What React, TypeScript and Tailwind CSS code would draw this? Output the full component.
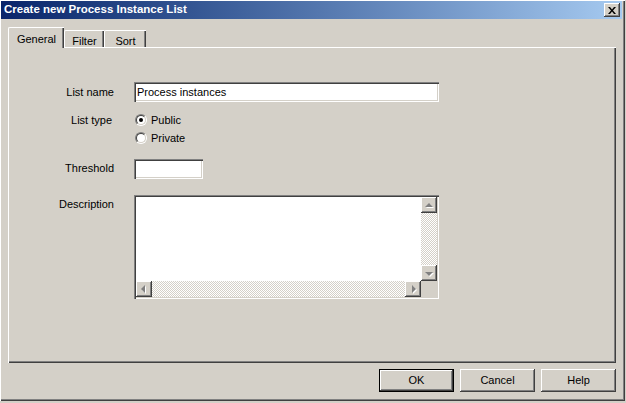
import React from "react";

const raised =
  "shadow-[inset_-1px_-1px_#404040,inset_1px_1px_#ffffff,inset_-2px_-2px_#808080]";
const sunken =
  "shadow-[inset_1px_1px_#808080,inset_2px_2px_#404040,inset_-1px_-1px_#ffffff,inset_-2px_-2px_#d4d0c8]";
const checker =
  "bg-[repeating-conic-gradient(#d4d0c8_0%_25%,#ffffff_0%_50%)] bg-[length:2px_2px]";

function Arrow({ dir }: { dir: "up" | "down" | "left" | "right" }) {
  const pts: Record<string, string> = {
    up: "3,8 7,4 11,8",
    down: "3,5 11,5 7,9",
    left: "8,2 8,10 4,6",
    right: "6,2 6,10 10,6",
  };
  return (
    <svg width="14" height="12" viewBox="0 0 14 12">
      <polygon points={pts[dir]} fill="#ffffff" transform="translate(1,1)" />
      <polygon points={pts[dir]} fill="#808080" />
    </svg>
  );
}

function ScrollButton({ dir }: { dir: "up" | "down" | "left" | "right" }) {
  return (
    <div
      className={`w-[16px] h-[16px] shrink-0 bg-[#d4d0c8] flex items-center justify-center ${raised}`}
    >
      <Arrow dir={dir} />
    </div>
  );
}

function Radio({ checked, label }: { checked?: boolean; label: string }) {
  return (
    <div className="h-[18px] flex items-center ml-[2px]">
      <div className="w-[12px] h-[12px] rounded-full border border-t-[#808080] border-l-[#808080] border-r-white border-b-white">
        <div className="w-full h-full rounded-full border border-t-[#404040] border-l-[#404040] border-r-[#d4d0c8] border-b-[#d4d0c8] bg-white flex items-center justify-center">
          {checked && <div className="w-[4px] h-[4px] rounded-full bg-black" />}
        </div>
      </div>
      <span className="ml-[4px]">{label}</span>
    </div>
  );
}

function Button({ label, isDefault }: { label: string; isDefault?: boolean }) {
  return (
    <div
      className={`w-[75px] h-[23px] bg-[#d4d0c8] flex items-center justify-center ${
        isDefault
          ? "border border-black shadow-[inset_-1px_-1px_#404040,inset_1px_1px_#ffffff,inset_-2px_-2px_#808080]"
          : raised
      }`}
    >
      {label}
    </div>
  );
}

export default function App() {
  return (
    <div
      className="w-[626px] h-[403px] bg-[#d4d0c8] text-[11px] text-black"
      style={{ fontFamily: '"Liberation Sans", Arial, sans-serif' }}
    >
      <div className="w-[625px] h-[401px] pl-px pt-px pr-[3px] flex flex-col shadow-[inset_1px_1px_#ffffff,inset_-1px_-1px_#404040,inset_-2px_-2px_#808080]">
        {/* title bar */}
        <div className="h-[18px] shrink-0 bg-linear-to-r from-[#0a246a] to-[#a6caf0] flex items-center justify-between pl-[3px] pr-[2px]">
          <span className="text-white font-bold text-[11.5px] leading-none">
            Create new Process Instance List
          </span>
          <div className={`w-[16px] h-[14px] bg-[#d4d0c8] flex items-center justify-center ${raised}`}>
            <svg width="8" height="7" viewBox="0 0 8 7">
              <path d="M0 0h2l2 2.5L6 0h2L5 3.5 8 7H6L4 4.5 2 7H0l3-3.5z" fill="#000" />
            </svg>
          </div>
        </div>

        {/* tabs */}
        <div className="mt-[8px] h-[20px] pl-[7px] flex items-end relative z-10">
          <div className="w-[56px] h-[21px] -mb-px bg-[#d4d0c8] border-t border-l border-white rounded-tl-[2px] shadow-[inset_-1px_0_#404040,inset_-2px_0_#808080] flex items-start justify-center pt-[3px]">
            General
          </div>
          <div className="w-[40px] h-[17px] bg-[#d4d0c8] border-t border-l border-white rounded-tl-[2px] shadow-[inset_-1px_0_#404040,inset_-2px_0_#808080] flex items-start justify-center pt-[2px]">
            Filter
          </div>
          <div className="w-[42px] h-[17px] bg-[#d4d0c8] border-t border-l border-white rounded-tl-[2px] shadow-[inset_-1px_0_#404040,inset_-2px_0_#808080] flex items-start justify-center pt-[2px]">
            Sort
          </div>
        </div>

        {/* panel */}
        <div className="ml-[7px] w-[608px] h-[316px] shrink-0 shadow-[inset_1px_1px_#ffffff,inset_-1px_-1px_#404040,inset_-2px_-2px_#808080] pl-px pt-[35px] flex flex-col">
          <div className="flex items-center">
            <div className="w-[105px] text-right">List name</div>
            <div className={`ml-[20px] w-[305px] h-[20px] bg-white ${sunken} flex items-center pl-[3px]`}>
              Process instances
            </div>
          </div>

          <div className="flex mt-[9px]">
            <div className="w-[103px] h-[18px] flex items-center justify-end">List type</div>
            <div className="ml-[22px] flex flex-col -translate-x-[1px]">
              <Radio checked label="Public" />
              <Radio label="Private" />
            </div>
          </div>

          <div className="flex items-center mt-[12px]">
            <div className="w-[105px] text-right -translate-y-[1px]">Threshold</div>
            <div className={`ml-[20px] w-[69px] h-[20px] bg-white ${sunken}`} />
          </div>

          <div className="flex mt-[16px]">
            <div className="w-[105px] text-right pt-[1px]">Description</div>
            <div className={`ml-[20px] w-[305px] h-[104px] bg-white ${sunken} p-[2px] flex flex-col`}>
              <div className="flex flex-1">
                <div className="flex-1" />
                <div className="w-[16px] flex flex-col">
                  <ScrollButton dir="up" />
                  <div className={`flex-1 ${checker}`} />
                  <ScrollButton dir="down" />
                </div>
              </div>
              <div className="h-[16px] flex">
                <ScrollButton dir="left" />
                <div className={`flex-1 ${checker}`} />
                <ScrollButton dir="right" />
                <div className="w-[16px] bg-[#d4d0c8]" />
              </div>
            </div>
          </div>
        </div>

        {/* buttons */}
        <div className="mt-[6px] flex justify-end gap-[6px] pr-[6px]">
          <Button label="OK" isDefault />
          <Button label="Cancel" />
          <Button label="Help" />
        </div>
      </div>
    </div>
  );
}
